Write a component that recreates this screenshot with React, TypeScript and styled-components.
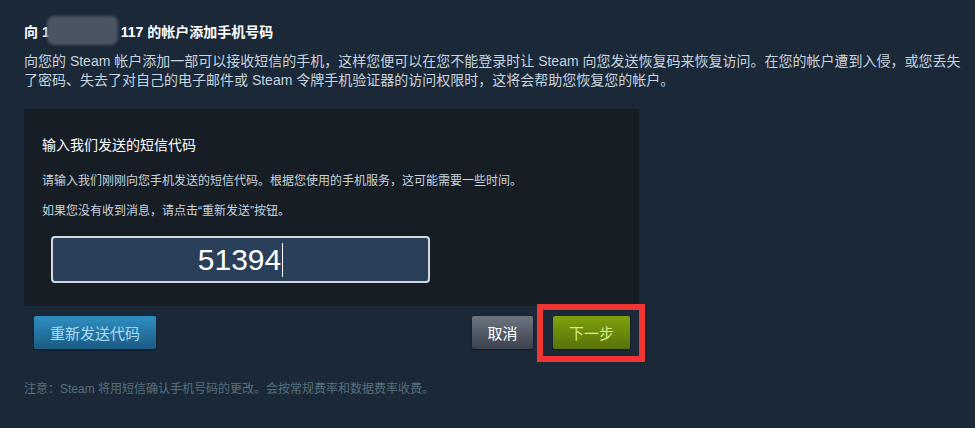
import React from 'react';
import styled, { createGlobalStyle } from 'styled-components';

const GlobalStyle = createGlobalStyle`
    html, body {
        margin: 0;
        padding: 0;
        background: #1b2838;
    }
    body {
        font-family: Arial, "Liberation Sans", "Noto Sans CJK SC", sans-serif;
    }
`;

const Page = styled.div`
    width: 975px;
    height: 428px;
    box-sizing: border-box;
    padding: 19px 24px 0;
    background: #1b2838;
    overflow: hidden;
`;

const Title = styled.h2`
    margin: 0;
    font-size: 14px;
    line-height: 18px;
    font-weight: bold;
    color: #ffffff;
    white-space: nowrap;
`;

const Redacted = styled.span`
    display: inline-block;
    position: relative;
    top: -3px;
    width: 71px;
    height: 29px;
    margin: 0 3px 0 -3px;
    vertical-align: middle;
    border-radius: 7px;
    background: #4b5462;
    filter: blur(1.5px);
`;

const Intro = styled.p`
    margin: 4px 0 0;
    font-size: 14px;
    line-height: 19px;
    color: #c6d4df;
    white-space: nowrap;
`;

const Panel = styled.section`
    margin-top: 19px;
    width: 615px;
    box-sizing: border-box;
    padding: 26px 18px 23px;
    background: #171d25;
`;

const PanelTitle = styled.h3`
    margin: 0;
    font-size: 14px;
    line-height: 20px;
    font-weight: normal;
    color: #ffffff;
`;

const PanelText = styled.p<{ $gap: number }>`
    margin: ${(p) => p.$gap}px 0 0;
    font-size: 12px;
    line-height: 18px;
    color: #c6d4df;
`;

const CodeField = styled.div`
    margin: 16px 0 0 9px;
    width: 379px;
    height: 47px;
    box-sizing: border-box;
    display: flex;
    align-items: center;
    justify-content: center;
    border: 2px solid #d6d9dc;
    border-radius: 4px;
    background: #2a3f5a;
    color: #ffffff;
    font-family: Arial, "Liberation Sans", sans-serif;
    font-size: 30px;
`;

const Caret = styled.span`
    display: inline-block;
    width: 1px;
    height: 34px;
    margin-left: 1px;
    background: #ffffff;
`;

const ButtonRow = styled.div`
    width: 615px;
    box-sizing: border-box;
    margin-top: 10px;
    padding: 0 9px 0 10px;
    display: flex;
    align-items: center;
`;

const Spacer = styled.div<{ $size?: number }>`
    flex: ${(p) => (p.$size ? `0 0 ${p.$size}px` : '1')};
`;

const variants = {
    blue: { bg: 'linear-gradient(to bottom, #2f8cc0 5%, #1b5d86 95%)', color: '#a7dbf7', width: 122 },
    grey: { bg: 'linear-gradient(to bottom, #6b737e 5%, #3d4450 95%)', color: '#ffffff', width: 61 },
    green: { bg: 'linear-gradient(to bottom, #7d9e0c 5%, #5b740a 95%)', color: '#d6ec8a', width: 77 },
};

const Button = styled.div<{ $kind: keyof typeof variants }>`
    position: relative;
    width: ${(p) => variants[p.$kind].width}px;
    height: 33px;
    display: flex;
    align-items: center;
    justify-content: center;
    border-radius: 2px;
    background: ${(p) => variants[p.$kind].bg};
    color: ${(p) => variants[p.$kind].color};
    font-size: 15px;
    box-shadow: 0 1px 2px rgba(0, 0, 0, 0.4);
`;

const Highlight = styled.div`
    position: absolute;
    left: -16px;
    right: -15px;
    top: -12px;
    bottom: -13px;
    border: 6px solid #f03535;
    pointer-events: none;
`;

const Note = styled.p`
    margin: 32px 0 0;
    font-size: 12px;
    line-height: 16px;
    color: #56707f;
`;

export default function App() {
    return (
        <>
            <GlobalStyle />
            <Page>
                <Title>
                    向 1<Redacted />117 的帐户添加手机号码
                </Title>
                <Intro>
                    向您的 Steam 帐户添加一部可以接收短信的手机，这样您便可以在您不能登录时让 Steam 向您发送恢复码来恢复访问。在您的帐户遭到入侵，或您丢失
                    <br />
                    了密码、失去了对自己的电子邮件或 Steam 令牌手机验证器的访问权限时，这将会帮助您恢复您的帐户。
                </Intro>
                <Panel>
                    <PanelTitle>输入我们发送的短信代码</PanelTitle>
                    <PanelText $gap={17}>请输入我们刚刚向您手机发送的短信代码。根据您使用的手机服务，这可能需要一些时间。</PanelText>
                    <PanelText $gap={12}>如果您没有收到消息，请点击“重新发送”按钮。</PanelText>
                    <CodeField>
                        51394<Caret />
                    </CodeField>
                </Panel>
                <ButtonRow>
                    <Button $kind="blue">重新发送代码</Button>
                    <Spacer />
                    <Button $kind="grey">取消</Button>
                    <Spacer $size={20} />
                    <Button $kind="green">
                        下一步
                        <Highlight />
                    </Button>
                </ButtonRow>
                <Note>注意：Steam 将用短信确认手机号码的更改。会按常规费率和数据费率收费。</Note>
            </Page>
        </>
    );
}
